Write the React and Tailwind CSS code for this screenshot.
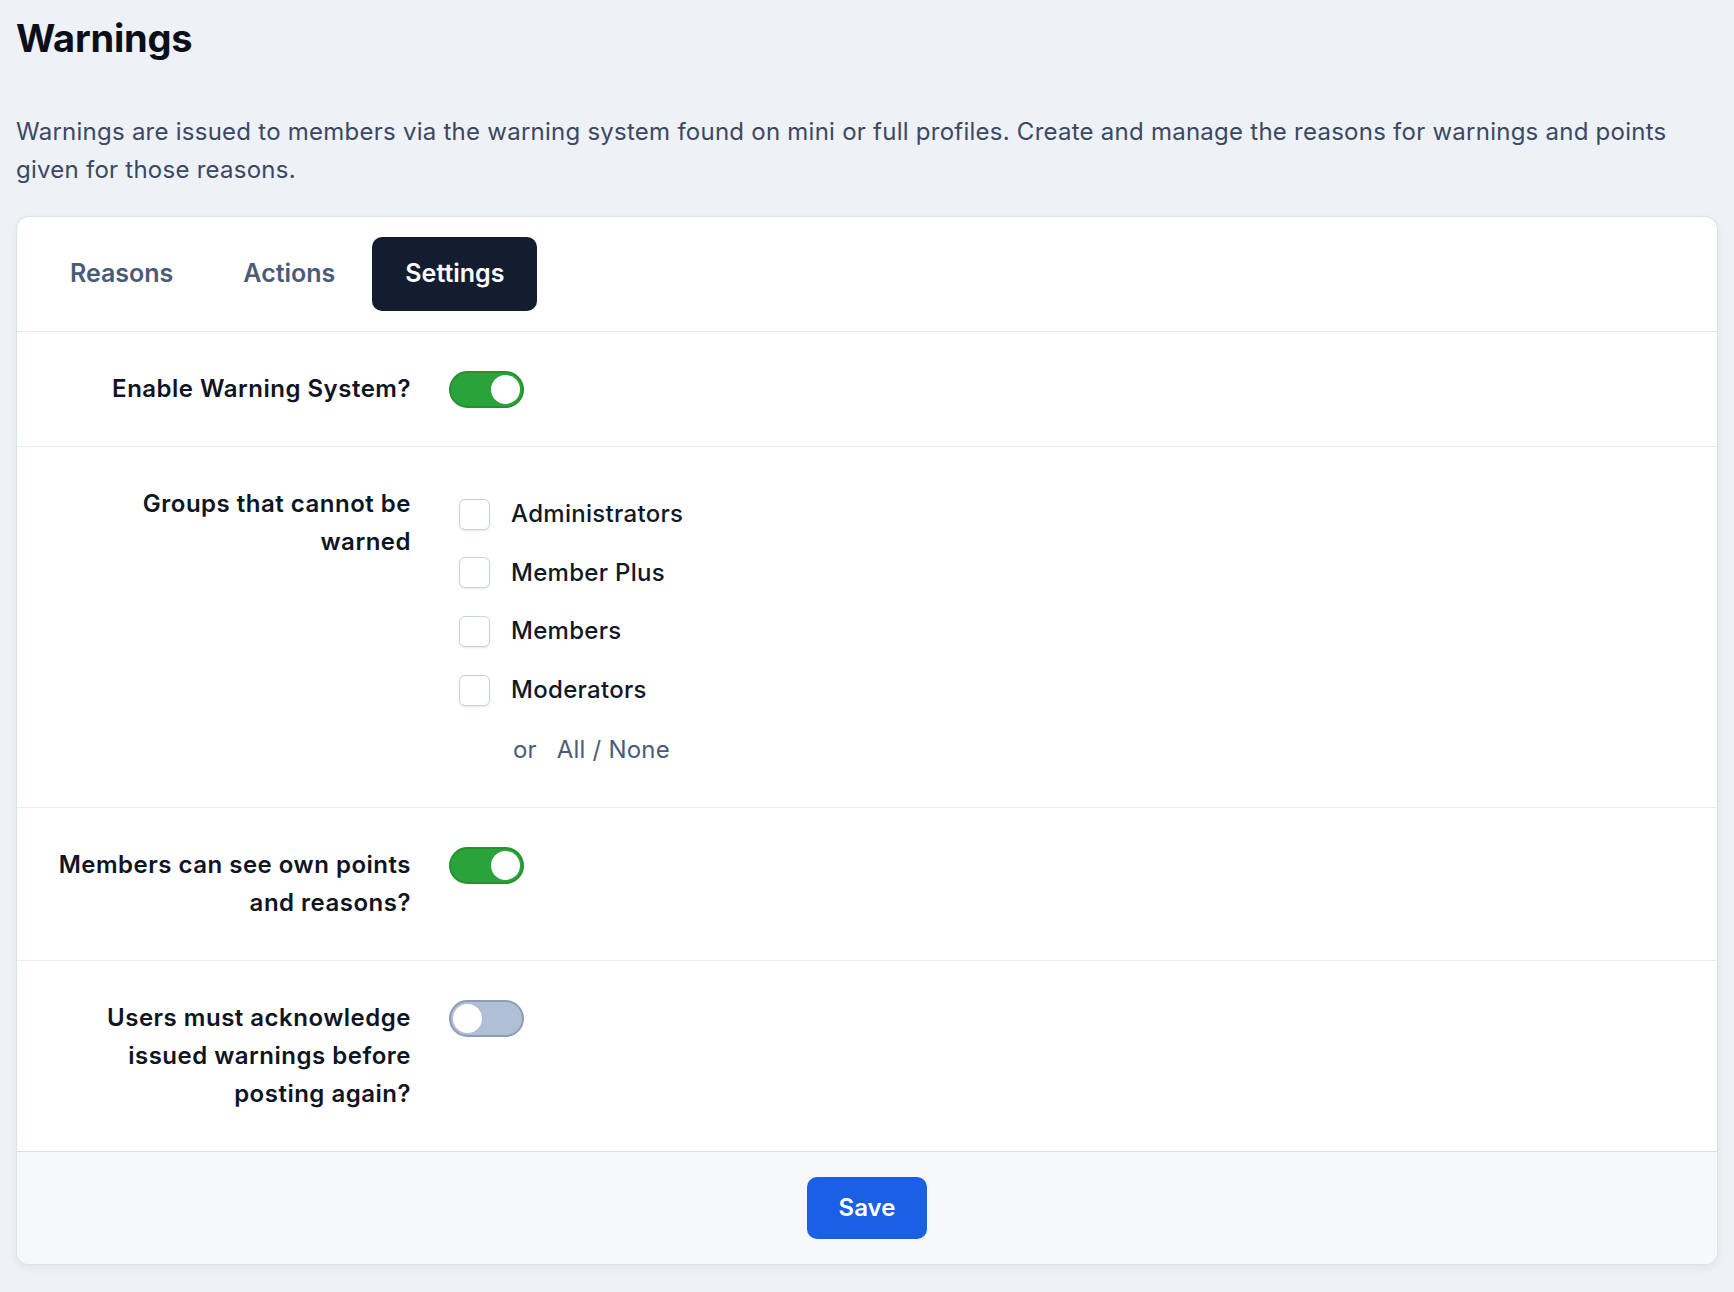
import React, { useState } from 'react';

const groups = ['Administrators', 'Member Plus', 'Members', 'Moderators'];
const tabs = ['Reasons', 'Actions', 'Settings'];

function Toggle({ on, onChange }) {
    return (
        <button
            type="button"
            onClick={() => onChange(!on)}
            className={`flex h-[37px] w-[75px] shrink-0 items-center rounded-full border-2 px-[2px] ${on ? 'justify-end border-[#23922f] bg-[#2aa33a]' : 'justify-start border-[#8e9cb6] bg-[#b1bfd6]'}`}
        >
            <span className="h-[29px] w-[29px] rounded-full bg-white"></span>
        </button>
    );
}

function Row({ label, children, last }) {
    return (
        <div className={`flex py-[38px] ${last ? '' : 'border-b border-[#e9edf2]'}`}>
            <div className="w-[394px] shrink-0 pl-[38px] text-right text-[24px] font-semibold leading-[38px] tracking-[0.5px] text-[#0f1523]">
                {label}
            </div>
            <div className="pl-[38px]">{children}</div>
        </div>
    );
}

export default function App() {
    const [activeTab, setActiveTab] = useState('Settings');
    const [enabled, setEnabled] = useState(true);
    const [seeOwn, setSeeOwn] = useState(true);
    const [mustAck, setMustAck] = useState(false);
    const [checked, setChecked] = useState({});

    const toggleGroup = (g) => setChecked({ ...checked, [g]: !checked[g] });
    const setAll = (val) => setChecked(Object.fromEntries(groups.map((g) => [g, val])));

    return (
        <div className="min-h-screen bg-[#eef1f6] px-4 pt-[15px] pb-[28px] font-['Inter',sans-serif]">
            <h1 className="text-[38px] font-bold leading-[46px] tracking-[-0.2px] text-[#0b0f19]">Warnings</h1>
            <p className="mt-[52px] text-[24px] leading-[38px] tracking-[0.25px] text-[#3b4863]">
                Warnings are issued to members via the warning system found on mini or full profiles. Create and manage the reasons for warnings and points given for those reasons.
            </p>

            <div className="mt-[27px] overflow-hidden rounded-[13px] border border-[#dce2eb] bg-white shadow-[0_3px_8px_rgba(15,23,42,0.06)]">
                <div className="flex gap-[4px] border-b border-[#e3e7ee] px-[20px] py-[20px]">
                    {tabs.map((t) => (
                        <button
                            key={t}
                            onClick={() => setActiveTab(t)}
                            className={`h-[74px] rounded-[10px] px-[33px] text-[25px] font-semibold ${activeTab === t ? 'bg-[#141c2f] text-white' : 'text-[#4a5b78]'}`}
                        >
                            {t}
                        </button>
                    ))}
                </div>

                <Row label="Enable Warning System?">
                    <div className="flex h-[38px] items-center">
                        <Toggle on={enabled} onChange={setEnabled} />
                    </div>
                </Row>

                <Row label="Groups that cannot be warned">
                    <div className="pl-[10px]">
                        {groups.map((g) => (
                            <label key={g} className="flex h-[58.6px] cursor-pointer items-center gap-[21px]">
                                <span
                                    onClick={() => toggleGroup(g)}
                                    className={`flex h-[31px] w-[31px] items-center justify-center rounded-[6px] border shadow-[0_1px_2px_rgba(15,23,42,0.1)] ${checked[g] ? 'border-[#1a5fe6] bg-[#1a5fe6]' : 'border-[#cad2dd] bg-white'}`}
                                >
                                    {checked[g] && (
                                        <svg viewBox="0 0 16 16" className="h-[18px] w-[18px]" fill="none" stroke="white" strokeWidth="2.5">
                                            <path d="M3 8.5l3.2 3L13 4.5" />
                                        </svg>
                                    )}
                                </span>
                                <span className="text-[24px] font-medium leading-[38px] tracking-[0.3px] text-[#111827]">{g}</span>
                            </label>
                        ))}
                        <div className="pl-[54px] pt-[12px] text-[24px] leading-[38px] tracking-[0.2px] text-[#4a5b78]">
                            or
                            <span className="ml-[20px]">
                                <button onClick={() => setAll(true)}>All</button> / <button onClick={() => setAll(false)}>None</button>
                            </span>
                        </div>
                    </div>
                </Row>

                <Row label="Members can see own points and reasons?">
                    <div className="flex h-[38px] items-center">
                        <Toggle on={seeOwn} onChange={setSeeOwn} />
                    </div>
                </Row>

                <Row label="Users must acknowledge issued warnings before posting again?" last>
                    <div className="flex h-[38px] items-center">
                        <Toggle on={mustAck} onChange={setMustAck} />
                    </div>
                </Row>

                <div className="flex justify-center border-t border-[#d8dfe9] bg-[#f7f8fa] py-[25px]">
                    <button className="h-[62px] w-[120px] rounded-[10px] bg-[#1a5fe6] text-[24px] font-semibold text-white">
                        Save
                    </button>
                </div>
            </div>
        </div>
    );
}
